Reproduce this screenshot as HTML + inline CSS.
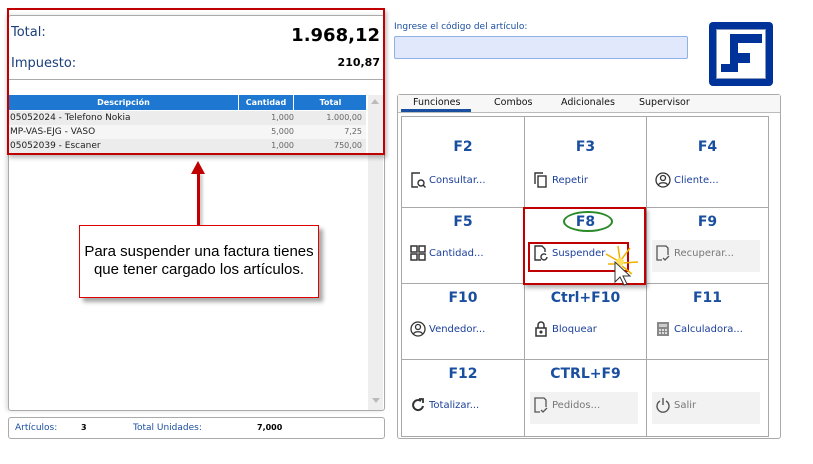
<!DOCTYPE html>
<html><head><meta charset="utf-8"><style>
*{box-sizing:border-box;margin:0;padding:0}
body{width:813px;height:464px;background:#fff;font-family:"Liberation Sans",sans-serif;position:relative;overflow:hidden}
.a{position:absolute}
.v{font-family:"DejaVu Sans",sans-serif}
.cell{position:absolute;border-right:1px solid #a8a8a8;border-bottom:1px solid #a8a8a8;text-align:center}
.key{position:absolute;left:0;right:0;top:22px;font:bold 14px "DejaVu Sans",sans-serif;color:#1a4fa0}
.btn{position:absolute;left:5px;top:58px;height:32px;width:108px;font:10px "DejaVu Sans",sans-serif;color:#1a3f9a;text-align:left;padding:8px 0 0 22px}
.btn.g{background:#f2f2f2;color:#777}
.ic{position:absolute;left:3px;top:5px}
</style></head><body>
<div class="a" style="left:8px;top:15px;width:377px;height:396px;border:1px solid #aaa;border-radius:3px;box-shadow:-2px 0 4px #ddd"></div>
<div class="a" style="left:368px;top:95px;width:15px;height:315px;background:#eee"></div>
<div class="a" style="left:371px;top:99px;border:4px solid transparent;border-bottom:5px solid #bbb;border-top:0"></div>
<div class="a" style="left:372px;top:398px;border:4px solid transparent;border-top:5px solid #bbb;border-bottom:0"></div>
<div class="a v" style="left:11px;top:25px;font-size:13px;color:#1a3f7a">Total:</div>
<div class="a v" style="right:433px;top:25px;font-size:18px;font-weight:bold;color:#000">1.968,12</div>
<div class="a v" style="left:11px;top:56px;font-size:13px;color:#1a3f7a">Impuesto:</div>
<div class="a v" style="right:433px;top:56px;font-size:11px;font-weight:bold">210,87</div>
<div class="a" style="left:8px;top:79px;width:376px;height:1px;background:#aaa"></div>
<div class="a v" style="left:9px;top:95px;width:357px;height:15px;background:#1e78d2;color:#fff;font-size:8px;font-weight:bold;line-height:15px">
<span class="a" style="left:0;width:229px;text-align:center">Descripción</span>
<span class="a" style="left:229px;width:56px;text-align:center;border-left:1px solid #fff;border-right:1px solid #fff">Cantidad</span>
<span class="a" style="left:286px;width:71px;text-align:center">Total</span></div>
<div class="a v" style="left:9px;top:111px;width:357px;font-size:8px;line-height:14px">
<div style="background:#ececec;position:relative;height:14px"><span style="color:#222;font-size:9px;padding-left:1px">05052024 - Telefono Nokia</span><span class="a" style="right:72px;color:#666">1,000</span><span class="a" style="right:4px;color:#666">1.000,00</span></div>
<div style="background:#f6f6f6;position:relative;height:14px"><span style="color:#222;font-size:9px;padding-left:1px">MP-VAS-EJG - VASO</span><span class="a" style="right:72px;color:#666">5,000</span><span class="a" style="right:4px;color:#666">7,25</span></div>
<div style="background:#ececec;position:relative;height:14px"><span style="color:#222;font-size:9px;padding-left:1px">05052039 - Escaner</span><span class="a" style="right:72px;color:#666">1,000</span><span class="a" style="right:4px;color:#666">750,00</span></div>
</div>
<div class="a" style="left:7px;top:8px;width:378px;height:147px;border:2px solid #c00000;box-shadow:2px 3px 4px rgba(0,0,0,.25)"></div>
<div class="a" style="left:197px;top:172px;width:3px;height:53px;background:#c00000;box-shadow:2px 2px 3px rgba(0,0,0,.3)"></div>
<div class="a" style="left:191px;top:161px;border-left:7px solid transparent;border-right:7px solid transparent;border-bottom:13px solid #c00000"></div>
<div class="a" style="left:79px;top:225px;width:240px;height:73px;border:1px solid #e00000;background:#fff;box-shadow:4px 4px 4px rgba(0,0,0,.35);text-align:center;font-size:15px;line-height:18px;padding-top:17px;color:#000">Para suspender una factura tienes<br>que tener cargado los artículos.</div>
<div class="a v" style="left:8px;top:417px;width:377px;height:22px;border:1px solid #aaa;border-radius:3px;font-size:9px;line-height:20px">
<span class="a" style="left:6px;color:#1a4fa0">Artículos:</span><span class="a" style="left:72px;font-weight:bold;font-size:8px">3</span>
<span class="a" style="left:124px;color:#1a4fa0">Total Unidades:</span><span class="a" style="left:248px;font-weight:bold;font-size:8px">7,000</span></div>
<div class="a v" style="left:394px;top:22px;font-size:9px;color:#1a4fa0">Ingrese el código del artículo:</div>
<div class="a" style="left:394px;top:36px;width:294px;height:23px;background:#e1e8fc;border:1px solid #8fb0e8;border-radius:2px"></div>
<div class="a" style="left:709px;top:22px;width:64px;height:64px;background:#003399;border-radius:4px"></div>
<div class="a" style="left:716px;top:29px;width:50px;height:50px;background:#fff;border:1px solid #8899bb"></div>
<div class="a" style="left:730px;top:34px;width:32px;height:9px;background:#003399"></div>
<div class="a" style="left:730px;top:34px;width:8px;height:38px;background:#003399"></div>
<div class="a" style="left:730px;top:53px;width:20px;height:10px;background:#003399"></div>
<div class="a" style="left:721px;top:64px;width:17px;height:8px;background:#003399"></div>
<div class="a" style="left:397px;top:94px;width:384px;height:345px;border:1px solid #aaa;border-radius:3px"></div>
<div class="a" style="left:398px;top:95px;width:382px;height:18px;background:#f7f7f7;border-bottom:1px solid #bbb"></div>
<div class="a v" style="left:398px;top:97px;width:382px;font-size:9.5px;color:#111">
<span class="a" style="left:15px">Funciones</span><span class="a" style="left:96px">Combos</span><span class="a" style="left:163px">Adicionales</span><span class="a" style="left:241px">Supervisor</span></div>
<div class="a" style="left:401px;top:109px;width:70px;height:3px;background:#1a4fa0"></div>
<div class="a" style="left:401px;top:116px;width:368px;height:321px;border-left:1px solid #a8a8a8;border-top:1px solid #a8a8a8"></div>
<div class="cell" style="left:402px;top:117px;width:123px;height:91px"><div class="key" style="top:22px">F2</div><div class="btn" style="top:50px"><svg class="ic" width="16" height="16" viewBox="0 0 16 16" fill="none" stroke="#333" stroke-width="1.4"><path d="M10 1H2v14h6"/><circle cx="11" cy="11" r="3"/><path d="M13 13l2.5 2.5"/></svg>Consultar...</div></div>
<div class="cell" style="left:525px;top:117px;width:122px;height:91px"><div class="key" style="top:22px">F3</div><div class="btn" style="top:50px"><svg class="ic" width="16" height="16" viewBox="0 0 16 16" fill="none" stroke="#333" stroke-width="1.4"><path d="M2 12V1h8"/><rect x="5" y="4" width="8" height="11"/></svg>Repetir</div></div>
<div class="cell" style="left:647px;top:117px;width:122px;height:91px"><div class="key" style="top:22px">F4</div><div class="btn" style="top:50px"><svg class="ic" width="16" height="16" viewBox="0 0 16 16" fill="none" stroke="#333" stroke-width="1.3"><circle cx="8" cy="8" r="7"/><circle cx="8" cy="6" r="2.5"/><path d="M3.5 13c1-3 8-3 9 0"/></svg>Cliente...</div></div>
<div class="cell" style="left:402px;top:208px;width:123px;height:76px"><div class="key" style="top:6px">F5</div><div class="btn" style="top:32px"><svg class="ic" width="16" height="16" viewBox="0 0 16 16" fill="none" stroke="#333" stroke-width="1.5"><rect x="1" y="1" width="6" height="6"/><rect x="9" y="1" width="6" height="6"/><rect x="1" y="9" width="6" height="6"/><rect x="9" y="9" width="6" height="6"/></svg>Cantidad...</div></div>
<div class="cell" style="left:525px;top:208px;width:122px;height:76px"><div class="key" style="top:6px">F8</div><div class="btn" style="top:32px;left:5px"><svg class="ic" width="16" height="16" viewBox="0 0 16 16" fill="none" stroke="#333" stroke-width="1.4"><path d="M8 15H2V1h7l3 3v3"/><path d="M14 12a3 3 0 1 1-1-2.3"/></svg>Suspender</div></div>
<div class="cell" style="left:647px;top:208px;width:122px;height:76px"><div class="key" style="top:6px">F9</div><div class="btn g" style="top:32px"><svg class="ic" width="16" height="16" viewBox="0 0 16 16" fill="none" stroke="#555" stroke-width="1.3"><path d="M7 15H2V1h9l2 2v7"/><path d="M8 13l2 2 4-4"/></svg>Recuperar...</div></div>
<div class="cell" style="left:402px;top:284px;width:123px;height:76px"><div class="key" style="top:6px">F10</div><div class="btn" style="top:32px"><svg class="ic" width="16" height="16" viewBox="0 0 16 16" fill="none" stroke="#333" stroke-width="1.3"><circle cx="8" cy="8" r="7"/><circle cx="8" cy="6" r="2.5"/><path d="M3.5 13c1-3 8-3 9 0"/></svg>Vendedor...</div></div>
<div class="cell" style="left:525px;top:284px;width:122px;height:76px"><div class="key" style="top:6px">Ctrl+F10</div><div class="btn" style="top:32px"><svg class="ic" width="16" height="16" viewBox="0 0 16 16" fill="none" stroke="#333" stroke-width="1.5"><rect x="3" y="7" width="10" height="8"/><path d="M5 7V4a3 3 0 0 1 6 0v3"/><circle cx="8" cy="11" r=".8" fill="#333"/></svg>Bloquear</div></div>
<div class="cell" style="left:647px;top:284px;width:122px;height:76px"><div class="key" style="top:6px">F11</div><div class="btn" style="top:32px"><svg class="ic" width="16" height="16" viewBox="0 0 16 16"><rect x="2" y="1" width="12" height="14" fill="#888"/><rect x="4" y="3" width="8" height="3" fill="#ccc"/><g fill="#ddd"><rect x="4" y="8" width="2" height="2"/><rect x="7" y="8" width="2" height="2"/><rect x="10" y="8" width="2" height="2"/><rect x="4" y="11" width="2" height="2"/><rect x="7" y="11" width="2" height="2"/><rect x="10" y="11" width="2" height="2"/></g></svg>Calculadora...</div></div>
<div class="cell" style="left:402px;top:360px;width:123px;height:77px"><div class="key" style="top:6px">F12</div><div class="btn" style="top:32px"><svg class="ic" width="16" height="16" viewBox="0 0 16 16" fill="none" stroke="#333" stroke-width="2"><path d="M13 9a5 5 0 1 1-2-5"/><path d="M9 2h4v4" stroke-width="1.8"/></svg>Totalizar...</div></div>
<div class="cell" style="left:525px;top:360px;width:122px;height:77px"><div class="key" style="top:6px">CTRL+F9</div><div class="btn g" style="top:32px"><svg class="ic" width="16" height="16" viewBox="0 0 16 16" fill="none" stroke="#555" stroke-width="1.3"><path d="M7 15H2V1h9l2 2v7"/><path d="M8 13l2 2 4-4"/></svg>Pedidos...</div></div>
<div class="cell" style="left:647px;top:360px;width:122px;height:77px"><div class="btn g" style="top:32px"><svg class="ic" width="16" height="16" viewBox="0 0 16 16" fill="none" stroke="#555" stroke-width="1.4"><path d="M5 4a6 6 0 1 0 6 0"/><path d="M8 1v7"/></svg>Salir</div></div>
<div class="a" style="left:523px;top:207px;width:123px;height:78px;border:2px solid #c00000;box-shadow:2px 3px 4px rgba(0,0,0,.3)"></div>
<div class="a" style="left:563px;top:211px;width:50px;height:21px;border:2px solid #2a8a2a;border-radius:50%"></div>
<div class="a" style="left:528px;top:242px;width:101px;height:30px;border:2px solid #c00000"></div>
<svg class="a" style="left:600px;top:244px" width="40" height="42" viewBox="0 0 40 42"><g stroke="#f0b000" stroke-width="1.5"><path d="M18 2l2 14M30 4l-9 12M38 18l-16 1M32 30l-10-8M8 20l12 0M6 10l14 8"/></g><circle cx="20" cy="18" r="4" fill="#ffe060"/><path d="M15 18v20l5-5 4 8 3-1-4-8 7 0z" fill="#fff" stroke="#333" stroke-width="1"/></svg>
</body></html>
